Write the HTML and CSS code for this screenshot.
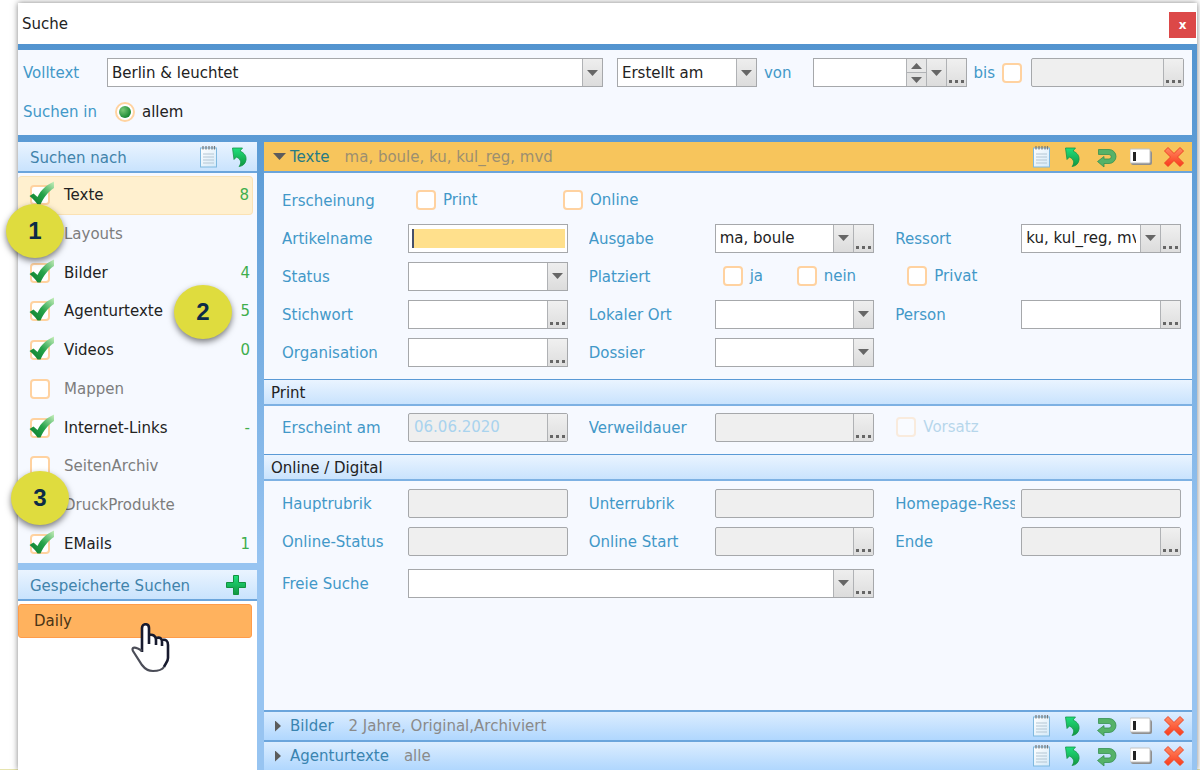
FILE: index.html
```html
<!DOCTYPE html>
<html lang="de">
<head>
  <meta charset="UTF-8" />
  <meta name="viewport" content="width=device-width, initial-scale=1.0"/>
  <title>Suche</title>
  <link rel="stylesheet" href="styles.css">
</head>
<body>

  <svg class="sprite" aria-hidden="true">
    <defs>
      <linearGradient id="greenFill" x1="0" y1="0" x2="0" y2="1">
        <stop offset="0" stop-color="#1fe07c"/>
        <stop offset="1" stop-color="#12953f"/>
      </linearGradient>
      <linearGradient id="redFill" x1="0" y1="0" x2="0" y2="1">
        <stop offset="0" stop-color="#ff8a62"/>
        <stop offset="1" stop-color="#fb3a1c"/>
      </linearGradient>
      <linearGradient id="paperFill" x1="0" y1="0" x2="1" y2="1">
        <stop offset="0" stop-color="#ffffff"/>
        <stop offset="1" stop-color="#d3e9f8"/>
      </linearGradient>
    </defs>
    <symbol id="icon-note" viewBox="0 0 22 22">
      <rect x="2.500" y="2" width="16" height="19" fill="url(#paperFill)" stroke="#7fb9e0"/>
      <path d="M5 0v3.500M8 0v3.500M11 0v3.500M14 0v3.500M16.500 0v3.500" stroke="#777" stroke-width="1.200"/>
      <path d="M5 8h11M5 11h11M5 14h11M5 17h11" stroke="#b4c6d3"/>
    </symbol>
    <symbol id="icon-back" viewBox="0 0 22 22">
      <path d="M1.500 2h10L9 5c4.500 2 6.500 5 6 9-.5 3.500-3 6-7 6.500 2.500-3 2.500-7-2.500-9.500L3 13.500z" fill="url(#greenFill)" stroke="#159447" stroke-width="0.800" stroke-linejoin="round"/>
    </symbol>
    <symbol id="icon-return" viewBox="0 0 22 22">
      <path d="M1.500 3.500H12a7 7 0 0 1 0 14H7V21L.5 15.500 7 10.500V13h5a2.250 2.250 0 0 0 0-4.500H1.500z" fill="#55b268" stroke="#369150" stroke-width="0.800" stroke-linejoin="round"/>
    </symbol>
    <symbol id="icon-field" viewBox="0 0 22 22">
      <rect x="1" y="5" width="21" height="14" rx="2" fill="#8f8f8f"/>
      <rect x="0" y="3" width="20" height="14" rx="1" fill="#fff" stroke="#c2c2c2"/>
      <rect x="3" y="6" width="3" height="9" fill="#222"/>
    </symbol>
    <symbol id="icon-delete" viewBox="0 0 22 22">
      <path d="M5 1.500l6 6 6-6L20.500 5l-6 6 6 6-3.500 3.500-6-6-6 6L1.500 17l6-6-6-6z" fill="url(#redFill)" stroke="#ee4425" stroke-linejoin="round"/>
    </symbol>
    <symbol id="icon-plus" viewBox="0 0 22 22">
      <path d="M8.500 1.500h5v7h7v5h-7v7h-5v-7h-7v-5h7z" fill="url(#greenFill)" stroke="#12923f" stroke-linejoin="round"/>
    </symbol>
  </svg>

  <div class="window">
    <header class="titlebar">
      <h1>Suche</h1>
      <button type="button" class="close" aria-label="Schließen">x</button>
    </header>

    <section class="search">
      <div class="search-row">
        <label class="search-label" for="volltext">Volltext</label>
        <div class="field grow">
          <input type="text" id="volltext" value="Berlin &amp; leuchtet">
          <button type="button" class="drop" aria-label="Verlauf"></button>
        </div>
        <div class="field period">
          <select aria-label="Zeitraum"><option>Erstellt am</option></select>
        </div>
        <label class="von" for="von">von</label>
        <div class="field date-from">
          <input type="text" id="von">
          <span class="spinner">
            <button type="button" class="up" aria-label="Später"></button>
            <button type="button" class="down" aria-label="Früher"></button>
          </span>
          <button type="button" class="drop" aria-label="Kalender"></button>
          <button type="button" class="more" aria-label="Mehr"></button>
        </div>
        <label class="check bis"><span>bis</span><input type="checkbox"></label>
        <div class="field date-to disabled">
          <input type="text" aria-label="Datum bis" disabled>
          <button type="button" class="more" aria-label="Mehr"></button>
        </div>
      </div>
      <div class="search-row">
        <span class="search-label">Suchen in</span>
        <label class="scope"><input type="radio" name="scope" checked><span>allem</span></label>
      </div>
    </section>

    <div class="columns">
      <aside class="sidebar">
        <section class="panel">
          <div class="panel-head">
            <h2>Suchen nach</h2>
            <button type="button" class="icon" aria-label="Liste"><svg><use href="#icon-note"/></svg></button>
            <button type="button" class="icon" aria-label="Zurücksetzen"><svg><use href="#icon-back"/></svg></button>
          </div>
          <ul class="types">
            <li class="active"><label><input type="checkbox" checked><span>Texte</span></label><b>8</b></li>
            <li class="off"><label><input type="checkbox"><span>Layouts</span></label></li>
            <li><label><input type="checkbox" checked><span>Bilder</span></label><b>4</b></li>
            <li><label><input type="checkbox" checked><span>Agenturtexte</span></label><b>5</b></li>
            <li><label><input type="checkbox" checked><span>Videos</span></label><b>0</b></li>
            <li class="off"><label><input type="checkbox"><span>Mappen</span></label></li>
            <li><label><input type="checkbox" checked><span>Internet-Links</span></label><b>-</b></li>
            <li class="off"><label><input type="checkbox"><span>SeitenArchiv</span></label></li>
            <li class="off"><label><input type="checkbox"><span>DruckProdukte</span></label></li>
            <li><label><input type="checkbox" checked><span>EMails</span></label><b>1</b></li>
          </ul>
        </section>
        <section class="panel saved">
          <div class="panel-head">
            <h2>Gespeicherte Suchen</h2>
            <button type="button" class="icon" aria-label="Hinzufügen"><svg><use href="#icon-plus"/></svg></button>
          </div>
          <button type="button" class="saved-item">Daily</button>
        </section>
      </aside>

      <main class="main">
        <div class="bar open">
          <button type="button" class="toggle"><i class="tri-down"></i><strong>Texte</strong><span>ma, boule, ku, kul_reg, mvd</span></button>
          <div class="tools">
            <button type="button" class="icon" aria-label="Liste"><svg><use href="#icon-note"/></svg></button>
            <button type="button" class="icon" aria-label="Zurücksetzen"><svg><use href="#icon-back"/></svg></button>
            <button type="button" class="icon" aria-label="Wiederholen"><svg><use href="#icon-return"/></svg></button>
            <button type="button" class="icon" aria-label="Feld"><svg><use href="#icon-field"/></svg></button>
            <button type="button" class="icon" aria-label="Entfernen"><svg><use href="#icon-delete"/></svg></button>
          </div>
        </div>

        <div class="form form-text">
          <div class="cell full">
            <span class="name">Erscheinung</span>
            <label class="check wide"><input type="checkbox"><span>Print</span></label>
            <label class="check"><input type="checkbox"><span>Online</span></label>
          </div>

          <div class="cell">
            <label class="name" for="artikel">Artikelname</label>
            <div class="field focused"><input type="text" id="artikel"></div>
          </div>
          <div class="cell">
            <label class="name" for="ausgabe">Ausgabe</label>
            <div class="field">
              <input type="text" id="ausgabe" value="ma, boule">
              <button type="button" class="drop" aria-label="Auswahl"></button>
              <button type="button" class="more" aria-label="Mehr"></button>
            </div>
          </div>
          <div class="cell">
            <label class="name" for="ressort">Ressort</label>
            <div class="field">
              <input type="text" id="ressort" value="ku, kul_reg, mvd">
              <button type="button" class="drop" aria-label="Auswahl"></button>
              <button type="button" class="more" aria-label="Mehr"></button>
            </div>
          </div>

          <div class="cell">
            <label class="name" for="status">Status</label>
            <div class="field"><select id="status"><option></option></select></div>
          </div>
          <div class="cell">
            <span class="name">Platziert</span>
            <label class="check narrow"><input type="checkbox"><span>ja</span></label>
            <label class="check"><input type="checkbox"><span>nein</span></label>
          </div>
          <div class="cell">
            <label class="check lone"><input type="checkbox"><span>Privat</span></label>
          </div>

          <div class="cell">
            <label class="name" for="stichwort">Stichwort</label>
            <div class="field"><input type="text" id="stichwort"><button type="button" class="more" aria-label="Mehr"></button></div>
          </div>
          <div class="cell">
            <label class="name" for="ort">Lokaler Ort</label>
            <div class="field"><select id="ort"><option></option></select></div>
          </div>
          <div class="cell">
            <label class="name" for="person">Person</label>
            <div class="field"><input type="text" id="person"><button type="button" class="more" aria-label="Mehr"></button></div>
          </div>

          <div class="cell">
            <label class="name" for="organisation">Organisation</label>
            <div class="field"><input type="text" id="organisation"><button type="button" class="more" aria-label="Mehr"></button></div>
          </div>
          <div class="cell">
            <label class="name" for="dossier">Dossier</label>
            <div class="field"><select id="dossier"><option></option></select></div>
          </div>
        </div>

        <h3 class="group">Print</h3>
        <div class="form">
          <div class="cell">
            <label class="name" for="erscheint">Erscheint am</label>
            <div class="field disabled"><input type="text" id="erscheint" value="06.06.2020" disabled><button type="button" class="more" aria-label="Mehr"></button></div>
          </div>
          <div class="cell">
            <label class="name" for="verweildauer">Verweildauer</label>
            <div class="field disabled"><input type="text" id="verweildauer" disabled><button type="button" class="more" aria-label="Mehr"></button></div>
          </div>
          <div class="cell">
            <label class="check faded"><input type="checkbox" disabled><span>Vorsatz</span></label>
          </div>
        </div>

        <h3 class="group">Online / Digital</h3>
        <div class="form form-online">
          <div class="cell">
            <label class="name" for="hauptrubrik">Hauptrubrik</label>
            <div class="field disabled"><input type="text" id="hauptrubrik" disabled></div>
          </div>
          <div class="cell">
            <label class="name" for="unterrubrik">Unterrubrik</label>
            <div class="field disabled"><input type="text" id="unterrubrik" disabled></div>
          </div>
          <div class="cell">
            <label class="name" for="homepage">Homepage-Ressort</label>
            <div class="field disabled"><input type="text" id="homepage" disabled></div>
          </div>

          <div class="cell">
            <label class="name" for="onlinestatus">Online-Status</label>
            <div class="field disabled"><input type="text" id="onlinestatus" disabled></div>
          </div>
          <div class="cell">
            <label class="name" for="start">Online Start</label>
            <div class="field disabled"><input type="text" id="start" disabled><button type="button" class="more" aria-label="Mehr"></button></div>
          </div>
          <div class="cell">
            <label class="name" for="ende">Ende</label>
            <div class="field disabled"><input type="text" id="ende" disabled><button type="button" class="more" aria-label="Mehr"></button></div>
          </div>

          <div class="cell double">
            <label class="name" for="frei">Freie Suche</label>
            <div class="field">
              <input type="text" id="frei">
              <button type="button" class="drop" aria-label="Verlauf"></button>
              <button type="button" class="more" aria-label="Mehr"></button>
            </div>
          </div>
        </div>

        <div class="bar">
          <button type="button" class="toggle"><i class="tri-right"></i><strong>Bilder</strong><span>2 Jahre, Original,Archiviert</span></button>
          <div class="tools">
            <button type="button" class="icon" aria-label="Liste"><svg><use href="#icon-note"/></svg></button>
            <button type="button" class="icon" aria-label="Zurücksetzen"><svg><use href="#icon-back"/></svg></button>
            <button type="button" class="icon" aria-label="Wiederholen"><svg><use href="#icon-return"/></svg></button>
            <button type="button" class="icon" aria-label="Feld"><svg><use href="#icon-field"/></svg></button>
            <button type="button" class="icon" aria-label="Entfernen"><svg><use href="#icon-delete"/></svg></button>
          </div>
        </div>
        <div class="bar">
          <button type="button" class="toggle"><i class="tri-right"></i><strong>Agenturtexte</strong><span>alle</span></button>
          <div class="tools">
            <button type="button" class="icon" aria-label="Liste"><svg><use href="#icon-note"/></svg></button>
            <button type="button" class="icon" aria-label="Zurücksetzen"><svg><use href="#icon-back"/></svg></button>
            <button type="button" class="icon" aria-label="Wiederholen"><svg><use href="#icon-return"/></svg></button>
            <button type="button" class="icon" aria-label="Feld"><svg><use href="#icon-field"/></svg></button>
            <button type="button" class="icon" aria-label="Entfernen"><svg><use href="#icon-delete"/></svg></button>
          </div>
        </div>
      </main>
    </div>

    <!-- numbered markers and pointer lie over the dialog -->
    <span class="marker marker-1">1</span>
    <span class="marker marker-2">2</span>
    <span class="marker marker-3">3</span>
    <svg class="pointer" viewBox="0 0 40 50" aria-hidden="true">
      <path d="M11 28V5c0-5 7-5 7 0v9c2-2 6-1 7 2 2-2 6-1 6 2 3-2 6 0 6 3v14c0 4-3 6-4 9-2 3-6 4-11 4s-8-2-11-6L2 28c-2-4 2-5 5-3z" fill="#fff"/>
      <path d="M11 29V5c0-5 7-5 7 0v16M18 12c4-1 7 1 7 5v5M25 15c4-1 6 0 6 4v4M31 17c4-1 6 1 6 5v13c0 4-3 6-4 9" fill="none" stroke="#171a2e" stroke-width="2.600"/>
      <path d="M33 44c-2 3-6 4-11 4s-8-2-11-6L2 28c-2-4 2-5 9 0" fill="none" stroke="#4b4d58" stroke-width="2.200"/>
    </svg>
  </div>

</body>
</html>
```
FILE: styles.css
```css
* {
  box-sizing: border-box;
}

body {
  margin: 0;
  min-height: 100vh;
  padding: 3px 3px 0 18px;
  display: flex;
  background: linear-gradient(#e6e4ae, #e6e4ae) left bottom / 100% 1px no-repeat #fff;
  font-family: "DejaVu Sans", Verdana, sans-serif;
  font-size: 15px;
  line-height: 20px;
  color: #222;
}

h1, h2, h3, ul {
  margin: 0;
  padding: 0;
  font-size: inherit;
  font-weight: normal;
}

button, input, select {
  margin: 0;
  padding: 0;
  border: 0;
  border-radius: 0;
  font: inherit;
  color: inherit;
  background: none;
}

.sprite {
  position: absolute;
  width: 0;
  height: 0;
}

.window {
  position: relative;
  flex: 1;
  min-width: 0;
  display: flex;
  flex-direction: column;
  background: linear-gradient(#4f91cd 0, #5b9bd5 140px, #97c4f1 560px, #97c4f1);
  box-shadow: 0 0 6px rgba(0, 0, 0, 0.5);
}

.titlebar {
  height: 41px;
  padding: 0 1px 0 4px;
  display: flex;
  align-items: center;
  justify-content: space-between;
  background: #fff;
}

.close {
  width: 27px;
  height: 26px;
  margin-top: 3px;
  background: #dc4848;
  color: #fff;
  font-size: 12px;
  font-weight: bold;
}

/* search head */
.search {
  margin: 6px 5px 7px 0;
  height: 85px;
  padding: 3px 8px 0 5px;
  background: #f6f9ff;
  color: #4298c8;
}

.search-row {
  height: 39px;
  display: flex;
  align-items: center;
}

.search-label {
  width: 84px;
}

.von {
  margin: 0 22px 0 7px;
}

.grow {
  flex: 1;
}

.search .period {
  flex: none;
  width: 140px;
  margin-left: 14px;
}

.search .date-from {
  flex: none;
  width: 154px;
}

.search .date-to {
  flex: none;
  width: 153px;
  margin-left: 9px;
}

.scope {
  display: flex;
  align-items: center;
  gap: 7px;
  margin-left: 8px;
  color: #222;
}

.scope input {
  appearance: none;
  display: grid;
  place-items: center;
  width: 20px;
  height: 20px;
  border: 2px solid #ffd3a0;
  border-radius: 50%;
  background: #fff;
}

.scope input:checked::after {
  content: "";
  width: 12px;
  height: 12px;
  border-radius: 50%;
  background: radial-gradient(circle at 4px 4px, #7cc978, #1c8a35 8px);
}

/* text fields with attached buttons */
.field {
  flex: 1;
  min-width: 0;
  height: 29px;
  display: flex;
  border: 1px solid #a6a8ab;
  background: #fff;
  color: #222;
}

.field input,
.field select {
  flex: 1;
  min-width: 0;
  width: 0;
  padding: 0 4px;
}

.field select {
  appearance: none;
  background:
    url("data:image/svg+xml,%3Csvg xmlns='http://www.w3.org/2000/svg' width='11' height='6'%3E%3Cpath d='M0 0h11L5.5 6z' fill='%23666'/%3E%3C/svg%3E") right 4px center no-repeat,
    linear-gradient(#b0b2b5, #b0b2b5) right 19px top / 1px 100% no-repeat,
    linear-gradient(#eee, #dcdcdc) right / 19px 100% no-repeat;
}

.field button {
  flex: none;
  width: 20px;
  border-left: 1px solid #b0b2b5;
}

.drop {
  background:
    url("data:image/svg+xml,%3Csvg xmlns='http://www.w3.org/2000/svg' width='11' height='6'%3E%3Cpath d='M0 0h11L5.5 6z' fill='%23666'/%3E%3C/svg%3E") center no-repeat,
    linear-gradient(#eee, #dcdcdc);
}

.more {
  background:
    url("data:image/svg+xml,%3Csvg xmlns='http://www.w3.org/2000/svg' width='15' height='3'%3E%3Cpath d='M0 0h3v3H0zM6 0h3v3H6zM12 0h3v3h-3z' fill='%23666'/%3E%3C/svg%3E") 2px 21px no-repeat,
    linear-gradient(#f0f0f0, #dedede);
}

.spinner {
  width: 20px;
  display: flex;
  flex-direction: column;
}

.field .spinner button {
  flex: 1;
}

.up {
  background:
    url("data:image/svg+xml,%3Csvg xmlns='http://www.w3.org/2000/svg' width='11' height='6'%3E%3Cpath d='M0 6h11L5.5 0z' fill='%23666'/%3E%3C/svg%3E") center no-repeat,
    #e8e8e8;
}

.down {
  border-top: 1px solid #b0b2b5;
  background:
    url("data:image/svg+xml,%3Csvg xmlns='http://www.w3.org/2000/svg' width='11' height='6'%3E%3Cpath d='M0 0h11L5.5 6z' fill='%23666'/%3E%3C/svg%3E") center no-repeat,
    #e2e2e2;
}

.disabled {
  background: #efefef;
  border-radius: 2px;
}

.disabled input {
  padding-left: 5px;
  color: #a9d3ee;
}

.focused input {
  height: 19px;
  margin: 4px 2px 4px 3px;
  border-left: 2px solid #46506b;
  background: #ffe08c;
}

/* check boxes */
input[type="checkbox"] {
  appearance: none;
  flex: none;
  width: 20px;
  height: 20px;
  border: 2px solid #ffd2a0;
  border-radius: 4px;
  background: #fff;
}

.check {
  display: flex;
  align-items: center;
  gap: 7px;
  margin-left: 8px;
}

.search .bis {
  margin-left: 6px;
}

.check.wide {
  width: 139px;
}

.check.narrow {
  width: 66px;
}

.check.lone {
  margin-left: 12px;
}

.check.faded {
  margin-left: 1px;
  opacity: 0.35;
}

/* columns */
.columns {
  flex: 1;
  display: flex;
  gap: 7px;
  padding-right: 5px;
}

.sidebar {
  flex: none;
  width: 239px;
  display: flex;
  flex-direction: column;
  gap: 7px;
}

.panel {
  background: #f6f9ff;
}

.panel-head {
  height: 31px;
  padding: 0 4px 0 12px;
  display: flex;
  align-items: center;
  gap: 11px;
  border-bottom: 2px solid #6ba5dc;
  background: linear-gradient(#eaf4ff, #c9e3fd);
  color: #4183ab;
}

.panel-head h2 {
  flex: 1;
  padding-top: 3px;
}

.saved .panel-head {
  padding-right: 10px;
}

.icon {
  width: 22px;
  height: 22px;
}

.icon svg {
  display: block;
  width: 22px;
  height: 22px;
}

.types {
  display: grid;
  grid-template-rows: repeat(10, 1fr);
  height: 390px;
  padding: 3px 4px 0 0;
  list-style: none;
}

.types li {
  display: flex;
  align-items: center;
  justify-content: space-between;
  padding: 0 3px 0 12px;
}

.types label {
  display: flex;
  align-items: center;
  gap: 14px;
}

.types b {
  font-weight: normal;
  color: #3fae4d;
}

.types .active {
  border: 1px solid #fbe2b4;
  border-left: 0;
  border-radius: 4px;
  background: #fff0cf;
}

.types .off {
  color: #7d7d7d;
}

.types input {
  position: relative;
}

.types input:checked::after {
  content: "";
  position: absolute;
  left: -3px;
  top: -6px;
  width: 26px;
  height: 26px;
  background: url("data:image/svg+xml,%3Csvg xmlns='http://www.w3.org/2000/svg' viewBox='0 0 26 26'%3E%3ClinearGradient id='g' x1='1' y1='0' x2='0' y2='1'%3E%3Cstop offset='0' stop-color='%23c9f0bd'/%3E%3Cstop offset='.5' stop-color='%2326a34a'/%3E%3Cstop offset='1' stop-color='%230b7a2a'/%3E%3C/linearGradient%3E%3Cpath d='M0.500 15l4-2.500 4 3.500C12 9 17 4 25 0.500v6.500C19 11 15 16 11.500 23.500H8.500C6 20 4 17.500 0.500 15z' fill='url(%23g)'/%3E%3C/svg%3E") no-repeat;
}

.saved {
  flex: 1;
  background: #fff;
}

.saved-item {
  display: block;
  width: 234px;
  height: 34px;
  margin-top: 3px;
  padding-left: 15px;
  border: 1px solid #ff9c4a;
  border-radius: 3px;
  background: #ffb25e;
  color: #4a3416;
  text-align: left;
}

/* main form */
.main {
  flex: 1;
  min-width: 0;
  display: flex;
  flex-direction: column;
  background: #f6f9ff;
}

.bar {
  height: 30px;
  padding: 0 7px 0 9px;
  display: flex;
  align-items: center;
  justify-content: space-between;
  border-top: 2px solid #6ba5dc;
  background: linear-gradient(#dcedff, #b0d7fe);
}

.bar.open {
  height: 31px;
  border-top: 0;
  border-bottom: 2px solid #6ba5dc;
  background: #f7c55c;
}

.toggle {
  display: flex;
  align-items: center;
  color: #8a8a8a;
}

.toggle strong {
  margin-right: 15px;
  font-weight: normal;
  color: #3a84b0;
}

.open .toggle strong {
  color: #267a84;
}

.open .toggle span {
  color: #9c8f70;
}

.tri-down {
  width: 13px;
  height: 7px;
  margin-right: 4px;
  background: #5c5c5c;
  clip-path: polygon(0 0, 100% 0, 50% 100%);
}

.tri-right {
  width: 6px;
  height: 11px;
  margin: 0 9px 0 2px;
  background: #5c5c5c;
  clip-path: polygon(0 0, 100% 50%, 0 100%);
}

.tools {
  display: flex;
  gap: 11px;
}

.form {
  display: grid;
  grid-template-columns: repeat(3, minmax(0, 1fr));
  grid-auto-rows: 38px;
  column-gap: 21px;
  padding: 2px 11px 8px 18px;
  color: #4298c8;
}

.form-text {
  padding-top: 8px;
}

.form-online {
  flex: 1;
  align-content: start;
  padding-top: 3px;
}

.cell {
  display: flex;
  align-items: center;
}

.cell.full {
  grid-column: span 3;
}

.cell.double {
  grid-column: span 2;
  margin-top: 8px;
}

.name {
  flex: none;
  width: 120px;
  margin-right: 6px;
  padding-top: 2px;
  overflow: hidden;
  white-space: nowrap;
}

.group {
  height: 27px;
  padding-left: 7px;
  line-height: 26px;
  border-top: 1px solid #5a9ad6;
  border-bottom: 2px solid #7db1e3;
  background: linear-gradient(#eaf4ff, #c9e3fd);
}

/* overlays */
.marker {
  position: absolute;
  width: 58px;
  height: 54px;
  border-radius: 50%;
  background: #dfdc3e;
  box-shadow: 0 3px 6px rgba(0, 0, 0, 0.5);
  color: #0c2b47;
  font: bold 24px/54px "Liberation Sans", Arial, sans-serif;
  text-align: center;
}

.marker-1 {
  left: -12px;
  top: 201px;
}

.marker-2 {
  left: 156px;
  top: 282px;
}

.marker-3 {
  left: -7px;
  top: 468px;
}

.pointer {
  position: absolute;
  left: 113px;
  top: 620px;
  width: 40px;
  height: 50px;
}
```
